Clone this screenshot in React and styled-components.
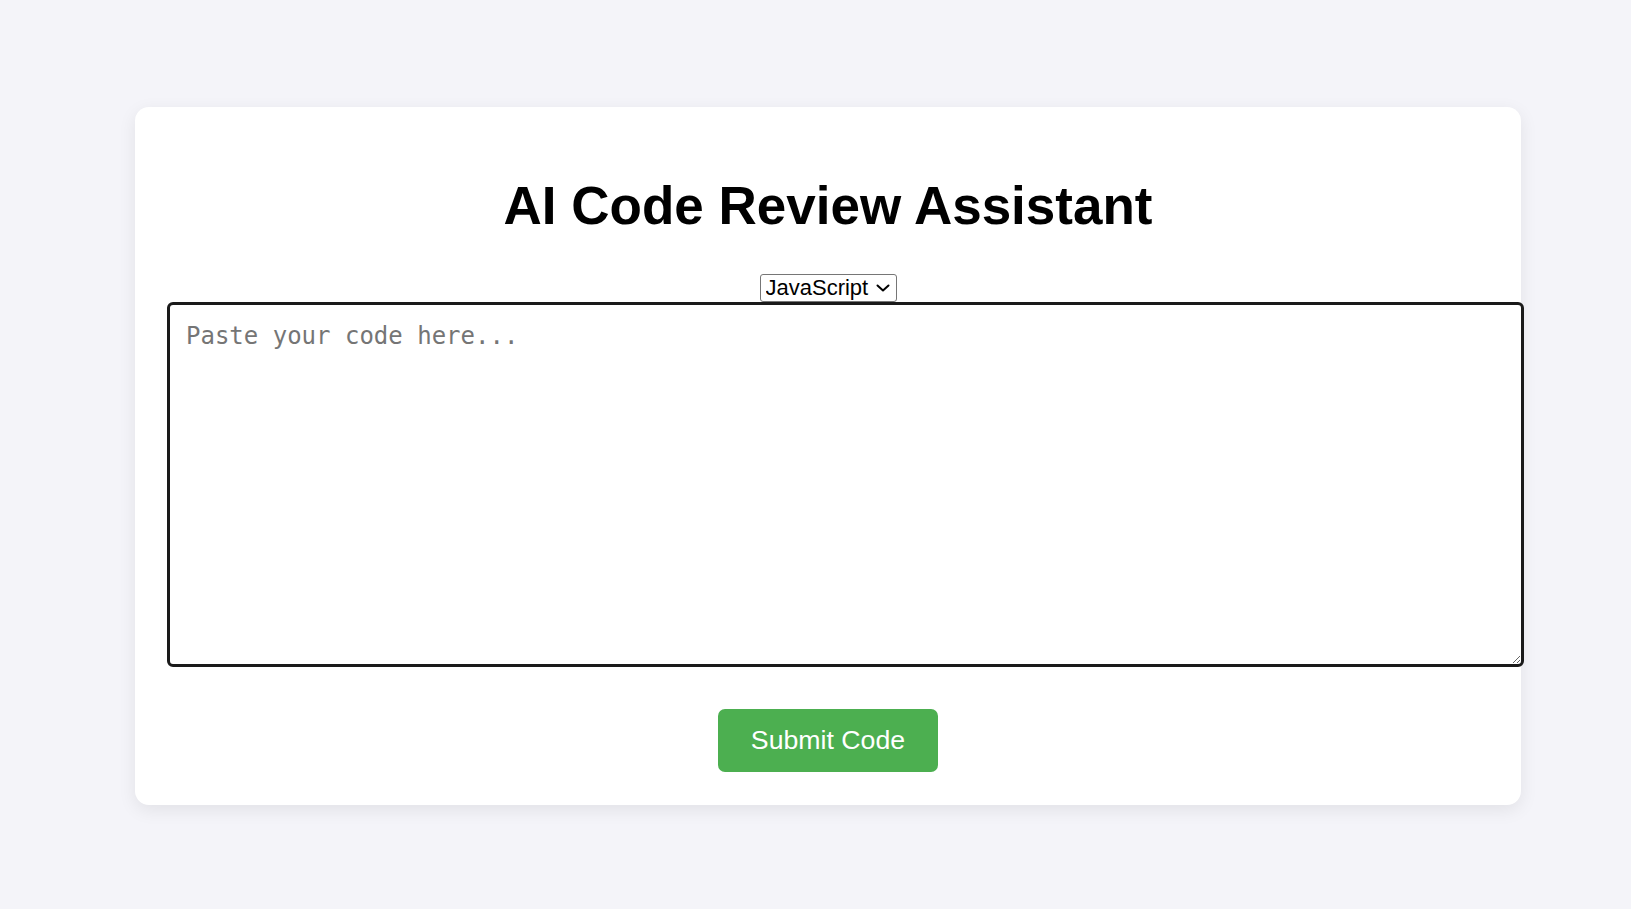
import styled, { createGlobalStyle } from "styled-components";
import { useState } from "react";

// Page-wide reset and background
const GlobalStyle = createGlobalStyle`
  html, body {
    margin: 0;
    padding: 0;
    background-color: #f4f4f9;
    font-family: "Liberation Sans", Arial, sans-serif;
  }
`;

const Page = styled.div`
  min-height: 909px;
  padding: 107px 0 0 135px;
  box-sizing: border-box;
`;

const Card = styled.main`
  width: 1386px;
  box-sizing: border-box;
  padding: 33px;
  background-color: #fff;
  border-radius: 14px;
  box-shadow: 0 5px 18px rgba(0, 0, 0, 0.08);
  display: flex;
  flex-direction: column;
  align-items: center;
`;

const Title = styled.h1`
  margin: 36px 0 38px;
  font-size: 53px;
  font-weight: bold;
  line-height: 60px;
  color: #000;
  text-align: center;
`;

const SelectWrap = styled.div`
  position: relative;
  display: inline-block;
`;

const LanguageSelect = styled.select`
  appearance: none;
  -webkit-appearance: none;
  display: block;
  width: 137px;
  height: 28px;
  padding: 0 26px 0 5px;
  font-family: "Liberation Sans", Arial, sans-serif;
  font-size: 22px;
  line-height: 24px;
  color: #000;
  background-color: #fff;
  border: 1px solid #767676;
  border-radius: 3px;
  outline: none;
`;

// chevron drawn over the select, the way the native arrow sits
const Chevron = styled.svg`
  position: absolute;
  right: 7px;
  top: 9px;
  width: 14px;
  height: 10px;
  pointer-events: none;
`;

// content-box + width 100%: the box runs a little past the card padding, as in the original
const CodeInput = styled.textarea`
  align-self: flex-start;
  display: block;
  box-sizing: content-box;
  width: 100%;
  height: 328px;
  margin: 0 0 0 -1px;
  padding: 17px 15px 14px 16px;
  border: 3px solid #1a1a1a;
  border-radius: 6px;
  font-family: "DejaVu Sans Mono", "Liberation Mono", monospace;
  font-size: 24px;
  line-height: 1.2;
  color: #000;
  background: #fff;
  outline: none;

  &::placeholder {
    color: #757575;
  }
`;

const SubmitButton = styled.button`
  margin-top: 42px;
  height: 63px;
  padding: 0 33px;
  font-family: "Liberation Sans", Arial, sans-serif;
  font-size: 26.7px;
  color: #fff;
  background-color: #4caf50;
  border: 0;
  border-radius: 7px;
  cursor: pointer;

  &:hover {
    background-color: #45a049;
  }
`;

export default function App() {
  const [language, setLanguage] = useState("javascript");
  const [code, setCode] = useState("");

  return (
    <>
      <GlobalStyle />
      <Page>
        <Card>
          <Title>AI Code Review Assistant</Title>
          <SelectWrap>
            <LanguageSelect
              value={language}
              onChange={(e) => setLanguage(e.target.value)}
            >
              <option value="javascript">JavaScript</option>
              <option value="python">Python</option>
              <option value="java">Java</option>
              <option value="cpp">C++</option>
            </LanguageSelect>
            <Chevron viewBox="0 0 14 10">
              <path
                d="M1.5 2.5 L7 7.5 L12.5 2.5"
                fill="none"
                stroke="#000"
                strokeWidth="2"
                strokeLinecap="round"
                strokeLinejoin="round"
              />
            </Chevron>
          </SelectWrap>
          <CodeInput
            placeholder="Paste your code here..."
            value={code}
            onChange={(e) => setCode(e.target.value)}
          />
          <SubmitButton>Submit Code</SubmitButton>
        </Card>
      </Page>
    </>
  );
}
